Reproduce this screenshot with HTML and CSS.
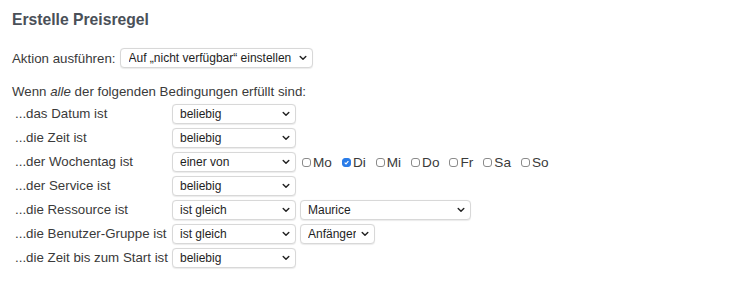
FILE: index.html
```html
<!DOCTYPE html>
<html lang="de">
<head>
    <meta charset="UTF-8">
    <title>Erstelle Preisregel</title>
    <link rel="stylesheet" href="styles.css">
</head>
<body>
    <div class="container">
        <h2>Erstelle Preisregel</h2>

        <div class="action-row">
            <span>Aktion ausführen:</span>
            <span class="sel sel-action">
                <select><option>Auf „nicht verfügbar“ einstellen</option></select>
                <svg class="chev" viewBox="0 0 10 6"><path d="M1.5 1.2 5 4.6 8.5 1.2"/></svg>
            </span>
        </div>

        <div class="intro">Wenn <em>alle</em> der folgenden Bedingungen erfüllt sind:</div>

        <div class="rules">
            <div class="label">...das Datum ist</div>
            <div class="fields">
                <span class="sel"><select><option>beliebig</option></select><svg class="chev" viewBox="0 0 10 6"><path d="M1.5 1.2 5 4.6 8.5 1.2"/></svg></span>
            </div>

            <div class="label">...die Zeit ist</div>
            <div class="fields">
                <span class="sel"><select><option>beliebig</option></select><svg class="chev" viewBox="0 0 10 6"><path d="M1.5 1.2 5 4.6 8.5 1.2"/></svg></span>
            </div>

            <div class="label">...der Wochentag ist</div>
            <div class="fields">
                <span class="sel"><select><option>einer von</option></select><svg class="chev" viewBox="0 0 10 6"><path d="M1.5 1.2 5 4.6 8.5 1.2"/></svg></span>
                <div class="days">
                    <label class="day"><span class="box"></span>Mo</label>
                    <label class="day"><span class="box checked"><svg viewBox="0 0 10 10"><path d="M2.4 5.2 4.3 7 7.7 3"/></svg></span>Di</label>
                    <label class="day"><span class="box"></span>Mi</label>
                    <label class="day"><span class="box"></span>Do</label>
                    <label class="day"><span class="box"></span>Fr</label>
                    <label class="day"><span class="box"></span>Sa</label>
                    <label class="day"><span class="box"></span>So</label>
                </div>
            </div>

            <div class="label">...der Service ist</div>
            <div class="fields">
                <span class="sel"><select><option>beliebig</option></select><svg class="chev" viewBox="0 0 10 6"><path d="M1.5 1.2 5 4.6 8.5 1.2"/></svg></span>
            </div>

            <div class="label">...die Ressource ist</div>
            <div class="fields">
                <span class="sel"><select><option>ist gleich</option></select><svg class="chev" viewBox="0 0 10 6"><path d="M1.5 1.2 5 4.6 8.5 1.2"/></svg></span>
                <span class="sel sel-wide"><select><option>Maurice</option></select><svg class="chev" viewBox="0 0 10 6"><path d="M1.5 1.2 5 4.6 8.5 1.2"/></svg></span>
            </div>

            <div class="label">...die Benutzer-Gruppe ist</div>
            <div class="fields">
                <span class="sel"><select><option>ist gleich</option></select><svg class="chev" viewBox="0 0 10 6"><path d="M1.5 1.2 5 4.6 8.5 1.2"/></svg></span>
                <span class="sel sel-small"><select><option>Anfänger</option></select><svg class="chev" viewBox="0 0 10 6"><path d="M1.5 1.2 5 4.6 8.5 1.2"/></svg></span>
            </div>

            <div class="label">...die Zeit bis zum Start ist</div>
            <div class="fields">
                <span class="sel"><select><option>beliebig</option></select><svg class="chev" viewBox="0 0 10 6"><path d="M1.5 1.2 5 4.6 8.5 1.2"/></svg></span>
            </div>
        </div>
    </div>
</body>
</html>
```

FILE: styles.css
```css
body {
    font-family: "Liberation Sans", Arial, sans-serif;
    margin: 0;
    background: #fff;
    color: #3a3a3a;
    font-size: 13.3px;
}
.container {
    padding: 11px 12px;
}
h2 {
    margin: 0 0 19px 0;
    font-size: 15.7px;
    font-weight: bold;
    color: #4a5058;
    line-height: 18px;
}
.action-row {
    display: flex;
    align-items: center;
    gap: 4px;
    height: 20px;
    margin-bottom: 14px;
}
.intro {
    line-height: 20px;
    margin-bottom: 2px;
}
.rules {
    display: grid;
    grid-template-columns: 157px auto;
    row-gap: 4px;
    align-items: center;
    padding-left: 3px;
}
.label {
    line-height: 20px;
}
.fields {
    display: flex;
    align-items: center;
    gap: 4px;
}
.sel {
    position: relative;
    display: inline-block;
    width: 124px;
    height: 20px;
}
.sel select {
    appearance: none;
    -webkit-appearance: none;
    width: 100%;
    height: 20px;
    margin: 0;
    padding: 0 18px 0 7px;
    border: 1px solid #d8d8d8;
    border-radius: 4px;
    background: #fff;
    font-family: "Liberation Sans", Arial, sans-serif;
    font-size: 12px;
    color: #1e1e1e;
    box-shadow: 0 0.5px 1px rgba(0,0,0,0.08);
}
.sel-action { width: 193px; }
.sel-action select { padding-left: 8px; }
.sel-wide { width: 171px; }
.sel-small { width: 75px; }
.chev {
    position: absolute;
    right: 6px;
    top: 7px;
    width: 8px;
    height: 6px;
    fill: none;
    stroke: #222;
    stroke-width: 1.8;
    stroke-linecap: round;
    stroke-linejoin: round;
    pointer-events: none;
}
.days {
    display: flex;
    align-items: center;
    gap: 10px;
    margin-left: 2px;
}
.day {
    display: flex;
    align-items: center;
    gap: 2px;
    font-size: 13.6px;
}
.box {
    display: inline-block;
    width: 7px;
    height: 7px;
    border: 1px solid #8a8a8a;
    border-radius: 3px;
    box-sizing: content-box;
}
.box.checked {
    background: #2a7ce8;
    border-color: #2a7ce8;
}
.box svg {
    display: block;
    width: 7px;
    height: 7px;
    fill: none;
    stroke: #fff;
    stroke-width: 1.6;
}
```
